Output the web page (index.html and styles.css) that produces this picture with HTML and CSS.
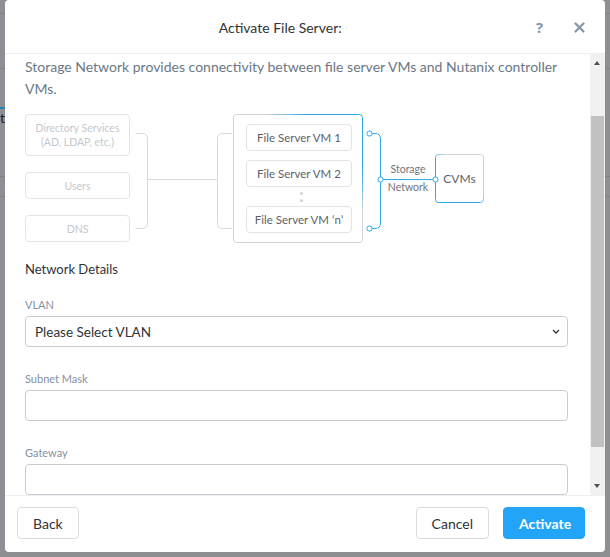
FILE: index.html
```html
<!DOCTYPE html>
<html>
<head>
<meta charset="utf-8">
<link rel="stylesheet" href="styles.css">
</head>
<body>
<div class="backdrop">
  <div class="bg-line l1"></div>
  <div class="bg-line l2"></div>
  <div class="bg-blue"></div>
  <div class="bg-t">t</div>
  <div class="bg-line l3"></div>
  <div class="bg-line l4"></div>
</div>
<div class="modal">
  <div class="header">
    <div class="title">Activate File Server: <span class="redacted">'</span></div>
    <div class="help">?</div>
    <div class="close">
      <svg width="11" height="11" viewBox="0 0 11 11"><path d="M1.5 1.5 L9.5 9.5 M9.5 1.5 L1.5 9.5" stroke="#8595a8" stroke-width="2.2" stroke-linecap="round"/></svg>
    </div>
  </div>
  <div class="body">
    <div class="content">
      <p class="intro">Storage Network provides connectivity between file server VMs and Nutanix controller VMs.</p>
      <div class="diagram">
        <svg class="wires" width="470" height="132" viewBox="0 0 470 132">
          <defs>
            <linearGradient id="bigG" x1="0" y1="1" x2="1" y2="0">
              <stop offset="0" stop-color="#cfd4da"/>
              <stop offset="0.62" stop-color="#cfd4da"/>
              <stop offset="0.78" stop-color="#2fa9e4"/>
              <stop offset="1" stop-color="#2fa9e4"/>
            </linearGradient>
            <linearGradient id="cvmG" x1="0" y1="1" x2="1" y2="0">
              <stop offset="0" stop-color="#2fa9e4"/>
              <stop offset="0.45" stop-color="#2fa9e4"/>
              <stop offset="0.6" stop-color="#cfd4da"/>
              <stop offset="1" stop-color="#cfd4da"/>
            </linearGradient>
          </defs>
          <path d="M110.5 20.5 H117 Q122.5 20.5 122.5 26 V110 Q122.5 115.5 117 115.5 H110.5" fill="none" stroke="#d6dade"/>
          <path d="M122.5 66.5 H192" fill="none" stroke="#d6dade"/>
          <path d="M207 20.5 H198 Q192.5 20.5 192.5 26 V110 Q192.5 115.5 198 115.5 H207" fill="none" stroke="#d6dade"/>
          <rect x="208.5" y="1.5" width="129" height="128" rx="3" fill="none" stroke="url(#bigG)"/>
          <path d="M347 20.5 H350 Q355.5 20.5 355.5 26 V110 Q355.5 115.5 350 115.5 H347" fill="none" stroke="#2fa9e4"/>
          <path d="M355.5 66.5 H408" fill="none" stroke="#2fa9e4"/>
          <rect x="410.5" y="41.5" width="48" height="48" rx="3" fill="none" stroke="url(#cvmG)"/>
          <circle cx="344.5" cy="20.5" r="2.6" fill="#fff" stroke="#2fa9e4"/>
          <circle cx="344.5" cy="115.5" r="2.6" fill="#fff" stroke="#2fa9e4"/>
          <circle cx="355.5" cy="66.5" r="2.6" fill="#fff" stroke="#2fa9e4"/>
          <circle cx="410.5" cy="66.5" r="2.6" fill="#fff" stroke="#2fa9e4"/>
          <circle cx="276.5" cy="80.5" r="1.6" fill="#d0d5da"/>
          <circle cx="276.5" cy="87.5" r="1.6" fill="#d0d5da"/>
        </svg>
        <div class="node src dir">Directory Services<br>(AD, LDAP, etc.)</div>
        <div class="node src users">Users</div>
        <div class="node src dns">DNS</div>
        <div class="node vm vm1">File Server VM 1</div>
        <div class="node vm vm2">File Server VM 2</div>
        <div class="node vm vmn">File Server VM ‘n’</div>
        <div class="storage">Storage<br>Network</div>
        <div class="cvms">CVMs</div>
      </div>
      <div class="section-title">Network Details</div>
      <div class="field">
        <label class="label">VLAN</label>
        <div class="select">
          <span>Please Select VLAN</span>
          <svg width="8" height="5" viewBox="0 0 8 5"><path d="M1 1 L4 4 L7 1" fill="none" stroke="#333" stroke-width="1.3"/></svg>
        </div>
      </div>
      <div class="field">
        <label class="label">Subnet Mask</label>
        <div class="input"></div>
      </div>
      <div class="field last">
        <label class="label">Gateway</label>
        <div class="input"></div>
      </div>
    </div>
    <div class="scrollbar">
      <div class="arrow up"></div>
      <div class="track">
        <div class="thumb"></div>
      </div>
      <div class="arrow down"></div>
    </div>
  </div>
  <div class="footer">
    <button class="btn">Back</button>
    <div class="spacer"></div>
    <button class="btn">Cancel</button>
    <button class="btn primary">Activate</button>
  </div>
</div>
</body>
</html>
```
FILE: styles.css
```css
* { box-sizing: border-box; }
html, body { margin: 0; padding: 0; }
body {
  width: 610px;
  height: 557px;
  background: #8e8f93;
  font-family: Lato, "Open Sans", sans-serif;
  position: relative;
  overflow: hidden;
}
.backdrop { position: absolute; inset: 0; }
.bg-line { position: absolute; left: 0; right: 0; height: 1px; background: #7f8084; }
.l1 { top: 13px; }
.l2 { top: 68px; }
.l3 { top: 176px; }
.l4 { top: 196px; }
.bg-blue { position: absolute; left: 0; width: 5px; top: 107px; height: 2px; background: #2a80b8; }
.bg-t { position: absolute; left: 0; top: 110px; font-size: 14px; color: #222; line-height: 16px; }

.modal {
  position: relative;
  margin-left: 5px;
  width: 600px;
  height: 552px;
  background: #fff;
  border-radius: 4px;
  display: flex;
  flex-direction: column;
  overflow: hidden;
}
.header {
  height: 54px;
  flex: none;
  border-bottom: 1px solid #eceef0;
  display: flex;
  align-items: center;
  position: relative;
}
.title {
  width: 100%;
  text-align: center;
  font-size: 14px;
  color: #2f3337;
  padding-top: 2px;
}
.redacted { display: inline-block; width: 46px; color: #e4e4e4; text-align: left; font-size: 10px; }
.help {
  position: absolute;
  left: 531px;
  top: 17px;
  font-family: "Open Sans", sans-serif;
  font-size: 15px;
  font-weight: 700;
  color: #8595a8;
}
.close {
  position: absolute;
  left: 569px;
  top: 22px;
  line-height: 0;
}
.body {
  flex: 1;
  display: flex;
  min-height: 0;
}
.content {
  flex: 1;
  padding: 2px 21px 0 20px;
  overflow: hidden;
}
.intro {
  margin: 0;
  font-size: 14px;
  line-height: 22px;
  color: #6b7786;
}
.diagram {
  position: relative;
  height: 132px;
  margin-top: 13px;
}
.wires { position: absolute; left: 0; top: 0; }
.node {
  position: absolute;
  border-radius: 4px;
  display: flex;
  align-items: center;
  justify-content: center;
  text-align: center;
  white-space: nowrap;
}
.src {
  left: 0;
  width: 105px;
  border: 1px solid #e2e5e8;
  color: #c3c8ce;
  font-size: 10.5px;
  line-height: 14px;
}
.dir { top: 1px; height: 42px; }
.users { top: 59px; height: 27px; }
.dns { top: 102px; height: 27px; }
.vm {
  left: 221px;
  width: 106px;
  height: 27px;
  border: 1px solid #e0e3e7;
  color: #5c6167;
  font-size: 11.5px;
}
.vm1 { top: 11px; }
.vm2 { top: 47px; }
.vmn { top: 93px; }
.storage {
  position: absolute;
  left: 356px;
  top: 47px;
  width: 54px;
  text-align: center;
  font-size: 10.5px;
  line-height: 18px;
  color: #6f757c;
}
.cvms {
  position: absolute;
  left: 410px;
  top: 41px;
  width: 49px;
  height: 49px;
  display: flex;
  align-items: center;
  justify-content: center;
  font-size: 12px;
  color: #5c6167;
}
.section-title {
  margin-top: 15px;
  font-size: 13px;
  line-height: 18px;
  color: #2f3337;
}
.field { margin-top: 19px; }
.field + .field { margin-top: 24px; }
.label {
  display: block;
  font-size: 11px;
  line-height: 16px;
  color: #8591a0;
  margin-bottom: 3px;
}
.select, .input {
  height: 31px;
  border: 1px solid #c7ccd3;
  border-radius: 4px;
  width: 543px;
}
.select {
  display: flex;
  align-items: center;
  justify-content: space-between;
  padding: 0 7px 0 9px;
  font-size: 13.5px;
  color: #2f3337;
}
.scrollbar {
  width: 15px;
  flex: none;
  background: #f1f1f1;
  display: flex;
  flex-direction: column;
}
.arrow { height: 17px; flex: none; position: relative; }
.arrow::after {
  content: "";
  position: absolute;
  left: 4px;
  border-left: 3.5px solid transparent;
  border-right: 3.5px solid transparent;
}
.up::after { top: 7px; border-bottom: 4px solid #505050; }
.down::after { top: 6px; border-top: 4px solid #505050; }
.track { flex: 1; padding-top: 45px; padding-bottom: 31px; display: flex; padding-left: 1px; padding-right: 1px; }
.thumb { flex: 1; background: #c1c1c1; }
.footer {
  flex: none;
  height: 57px;
  border-top: 1px solid #eceef0;
  display: flex;
  align-items: flex-start;
  padding: 11px 20px 0 12px;
}
.spacer { flex: 1; }
.btn {
  height: 32px;
  border: 1px solid #d7dbe0;
  border-radius: 4px;
  background: #fff;
  font-family: Lato, "Open Sans", sans-serif;
  font-size: 14px;
  color: #2f3337;
  padding: 0 15px;
}
.btn + .btn { margin-left: 14px; }
.primary {
  background: #22a5f7;
  border-color: #22a5f7;
  color: #fff;
  font-weight: 700;
  width: 82px;
}
```
